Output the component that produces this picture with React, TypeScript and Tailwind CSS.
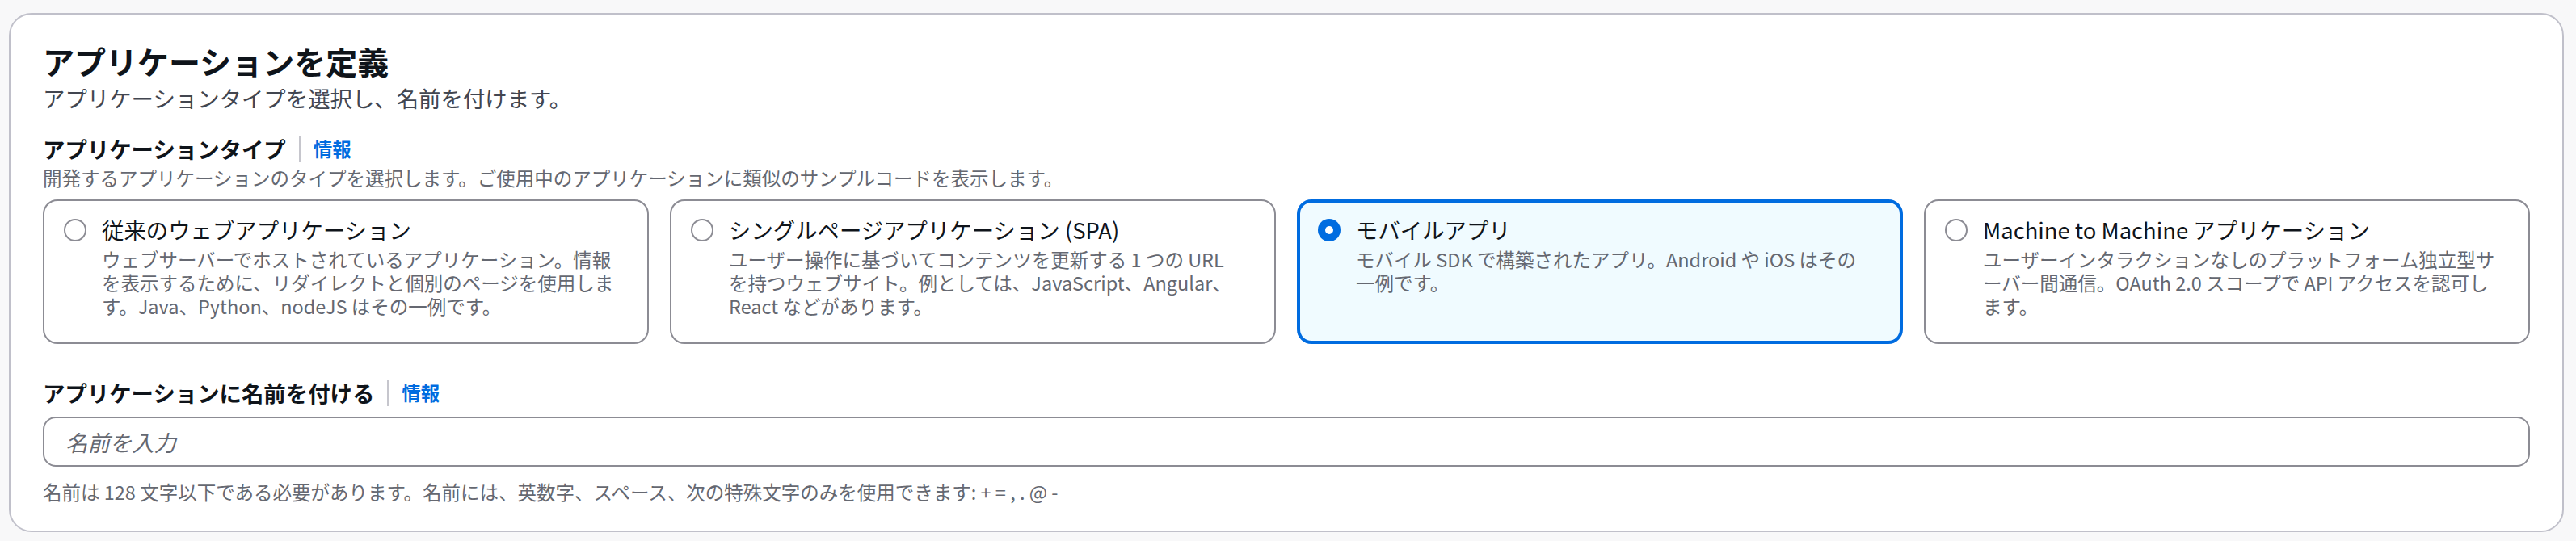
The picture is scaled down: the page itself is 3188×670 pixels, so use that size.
import React from "react";

type Opt = { title: string; lines: string[]; selected?: boolean };

const options: Opt[] = [
  {
    title: "従来のウェブアプリケーション",
    lines: [
      "ウェブサーバーでホストされているアプリケーション。情報",
      "を表示するために、リダイレクトと個別のページを使用しま",
      "す。Java、Python、nodeJS はその一例です。",
    ],
  },
  {
    title: "シングルページアプリケーション (SPA)",
    lines: [
      "ユーザー操作に基づいてコンテンツを更新する 1 つの URL",
      "を持つウェブサイト。例としては、JavaScript、Angular、",
      "React などがあります。",
    ],
  },
  {
    title: "モバイルアプリ",
    lines: ["モバイル SDK で構築されたアプリ。Android や iOS はその", "一例です。"],
    selected: true,
  },
  {
    title: "Machine to Machine アプリケーション",
    lines: [
      "ユーザーインタラクションなしのプラットフォーム独立型サ",
      "ーバー間通信。OAuth 2.0 スコープで API アクセスを認可し",
      "ます。",
    ],
  },
];

function Radio({ selected }: { selected?: boolean }) {
  if (selected) {
    return (
      <div className="flex h-[28px] w-[28px] items-center justify-center rounded-full bg-[#006ce0]">
        <div className="h-[10px] w-[10px] rounded-full bg-white" />
      </div>
    );
  }
  return <div className="h-[28px] w-[28px] rounded-full border-2 border-[#8c8c94] bg-white" />;
}

function Tile({ o }: { o: Opt }) {
  return (
    <div
      className={
        o.selected
          ? "flex items-start gap-[19px] rounded-[18px] border-4 border-[#006ce0] bg-[#f0fbff] pl-[22px] pr-[22px] pt-[14px] pb-[28px]"
          : "flex items-start gap-[19px] rounded-[18px] border-2 border-[#8c8c94] bg-white pl-[24px] pr-[24px] pt-[16px] pb-[30px]"
      }
    >
      <div className="flex h-[39px] shrink-0 items-center">
        <Radio selected={o.selected} />
      </div>
      <div className="flex flex-col">
        <div className="whitespace-nowrap text-[27.4px] leading-[39px] text-[#0f141a]">{o.title}</div>
        <div className="mt-[3px] text-[23.5px] leading-[29px] text-[#656871]">
          {o.lines.map((l, i) => (
            <div key={i} className="whitespace-nowrap">
              {l}
            </div>
          ))}
        </div>
      </div>
    </div>
  );
}

function Label({ text }: { text: string }) {
  return (
    <div className="flex items-center">
      <span className="text-[27.4px] font-bold leading-[39px] text-[#0f141a]">{text}</span>
      <span className="ml-[16px] h-[33px] w-[2px] bg-[#c6c6cd]" />
      <span className="ml-[16px] text-[23.5px] font-bold leading-[39px] text-[#006ce0]">情報</span>
    </div>
  );
}

export default function App() {
  return (
    <div
      className="min-h-[670px] w-[3188px] bg-[#f8f8f9] pl-[11px] pr-[15px] pt-[16px] pb-[10px]"
      style={{ fontFamily: '"Noto Sans CJK JP", "Noto Sans", sans-serif' }}
    >
      <div className="rounded-[28px] border-2 border-[#c0c0ca] bg-white px-[40px] pt-[33px] pb-[34px]">
        <h1 className="text-[39px] font-bold leading-[48px] text-[#0f141a]">アプリケーションを定義</h1>
        <p className="mt-[3px] text-[27.4px] leading-[39px] text-[#424650]">
          アプリケーションタイプを選択し、名前を付けます。
        </p>

        <div className="mt-[24px]">
          <Label text="アプリケーションタイプ" />
          <p className="mt-[2px] text-[23.5px] leading-[28px] text-[#656871]">
            開発するアプリケーションのタイプを選択します。ご使用中のアプリケーションに類似のサンプルコードを表示します。
          </p>
        </div>

        <div className="mt-[13px] grid grid-cols-4 gap-[26px]">
          {options.map((o) => (
            <Tile key={o.title} o={o} />
          ))}
        </div>

        <div className="mt-[41px]">
          <Label text="アプリケーションに名前を付ける" />
          <input
            type="text"
            placeholder="名前を入力"
            className="mt-[10px] block h-[62px] w-full rounded-[16px] border-2 border-[#8c8c94] bg-white px-[26px] text-[27.4px] text-[#0f141a] outline-none placeholder:italic placeholder:text-[#656871]"
          />
          <p className="mt-[17px] text-[23.5px] leading-[28px] text-[#656871]">
            名前は 128 文字以下である必要があります。名前には、英数字、スペース、次の特殊文字のみを使用できます: + = , . @ -
          </p>
        </div>
      </div>
    </div>
  );
}
